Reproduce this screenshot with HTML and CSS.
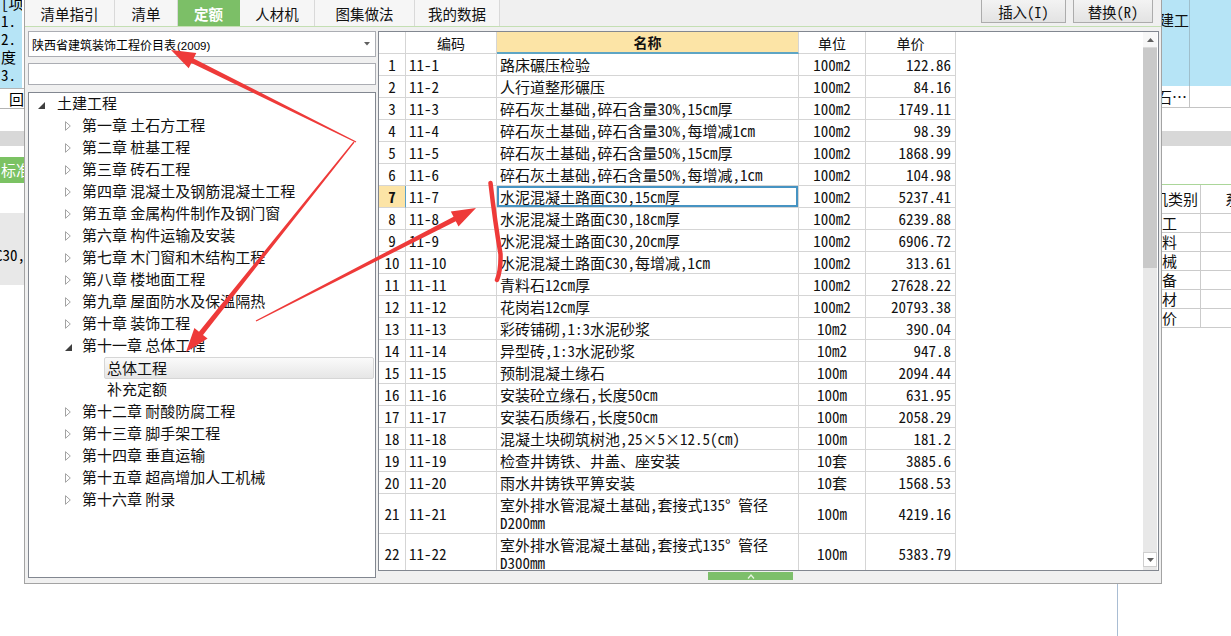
FILE: index.html
```html
<!DOCTYPE html>
<html lang="zh-CN">
<head>
<meta charset="utf-8">
<title>定额</title>
<link rel="stylesheet" href="styles.css">
</head>
<body>
<div class="screen">
  <aside class="bg-left">
    <div class="bl-blue">
      <div class="bl-ln first">[项</div>
      <div class="bl-ln">1.</div>
      <div class="bl-ln">2.</div>
      <div class="bl-ln">度</div>
      <div class="bl-ln">3.</div>
    </div>
    <div class="bl-row">回</div>
    <div class="bl-s1"></div>
    <div class="bl-gray"></div>
    <div class="bl-s2"></div>
    <div class="bl-green">标准</div>
    <div class="bl-s3"></div>
    <div class="bl-panel">C30,</div>
  </aside>

  <section class="dialog">
    <header class="topbar">
      <nav class="tabs">
        <div class="tab t1">清单指引</div>
        <div class="tab t2">清单</div>
        <div class="tab t3 active">定额</div>
        <div class="tab t4">人材机</div>
        <div class="tab t5">图集做法</div>
        <div class="tab t6">我的数据</div>
      </nav>
      <div class="btns">
        <div class="btn b1">插入(I)</div>
        <div class="btn b2">替换(R)</div>
      </div>
    </header>
    <div class="body">
      <div class="leftpane">
        <div class="combo">
          <span class="combo-text">陕西省建筑装饰工程价目表<span class="yr">(2009)</span></span>
          <svg class="combo-arrow" width="6" height="4" viewBox="0 0 6 4"><polygon points="0,0 6,0 3,3.5" fill="#606060"/></svg>
        </div>
        <div class="search"></div>
        <div class="tree">
          <div class="node lv0"><span class="ic"><svg width="7" height="7" viewBox="0 0 7 7"><polygon points="7,0 7,7 0,7" fill="#3f3f3f"/></svg></span><span>土建工程</span></div>
          <div class="node lv1"><span class="ic"><svg width="6" height="10" viewBox="0 0 6 10"><path d="M0.5,0.7 L5.3,5 L0.5,9.3 Z" fill="#fff" stroke="#a3a3a3" stroke-width="1"/></svg></span><span>第一章 土石方工程</span></div>
          <div class="node lv1"><span class="ic"><svg width="6" height="10" viewBox="0 0 6 10"><path d="M0.5,0.7 L5.3,5 L0.5,9.3 Z" fill="#fff" stroke="#a3a3a3" stroke-width="1"/></svg></span><span>第二章 桩基工程</span></div>
          <div class="node lv1"><span class="ic"><svg width="6" height="10" viewBox="0 0 6 10"><path d="M0.5,0.7 L5.3,5 L0.5,9.3 Z" fill="#fff" stroke="#a3a3a3" stroke-width="1"/></svg></span><span>第三章 砖石工程</span></div>
          <div class="node lv1"><span class="ic"><svg width="6" height="10" viewBox="0 0 6 10"><path d="M0.5,0.7 L5.3,5 L0.5,9.3 Z" fill="#fff" stroke="#a3a3a3" stroke-width="1"/></svg></span><span>第四章 混凝土及钢筋混凝土工程</span></div>
          <div class="node lv1"><span class="ic"><svg width="6" height="10" viewBox="0 0 6 10"><path d="M0.5,0.7 L5.3,5 L0.5,9.3 Z" fill="#fff" stroke="#a3a3a3" stroke-width="1"/></svg></span><span>第五章 金属构件制作及钢门窗</span></div>
          <div class="node lv1"><span class="ic"><svg width="6" height="10" viewBox="0 0 6 10"><path d="M0.5,0.7 L5.3,5 L0.5,9.3 Z" fill="#fff" stroke="#a3a3a3" stroke-width="1"/></svg></span><span>第六章 构件运输及安装</span></div>
          <div class="node lv1"><span class="ic"><svg width="6" height="10" viewBox="0 0 6 10"><path d="M0.5,0.7 L5.3,5 L0.5,9.3 Z" fill="#fff" stroke="#a3a3a3" stroke-width="1"/></svg></span><span>第七章 木门窗和木结构工程</span></div>
          <div class="node lv1"><span class="ic"><svg width="6" height="10" viewBox="0 0 6 10"><path d="M0.5,0.7 L5.3,5 L0.5,9.3 Z" fill="#fff" stroke="#a3a3a3" stroke-width="1"/></svg></span><span>第八章 楼地面工程</span></div>
          <div class="node lv1"><span class="ic"><svg width="6" height="10" viewBox="0 0 6 10"><path d="M0.5,0.7 L5.3,5 L0.5,9.3 Z" fill="#fff" stroke="#a3a3a3" stroke-width="1"/></svg></span><span>第九章 屋面防水及保温隔热</span></div>
          <div class="node lv1"><span class="ic"><svg width="6" height="10" viewBox="0 0 6 10"><path d="M0.5,0.7 L5.3,5 L0.5,9.3 Z" fill="#fff" stroke="#a3a3a3" stroke-width="1"/></svg></span><span>第十章 装饰工程</span></div>
          <div class="node lv1"><span class="ic"><svg width="7" height="7" viewBox="0 0 7 7"><polygon points="7,0 7,7 0,7" fill="#3f3f3f"/></svg></span><span>第十一章 总体工程</span></div>
          <div class="node lv2 sel"><span>总体工程</span></div>
          <div class="node lv2"><span>补充定额</span></div>
          <div class="node lv1"><span class="ic"><svg width="6" height="10" viewBox="0 0 6 10"><path d="M0.5,0.7 L5.3,5 L0.5,9.3 Z" fill="#fff" stroke="#a3a3a3" stroke-width="1"/></svg></span><span>第十二章 耐酸防腐工程</span></div>
          <div class="node lv1"><span class="ic"><svg width="6" height="10" viewBox="0 0 6 10"><path d="M0.5,0.7 L5.3,5 L0.5,9.3 Z" fill="#fff" stroke="#a3a3a3" stroke-width="1"/></svg></span><span>第十三章 脚手架工程</span></div>
          <div class="node lv1"><span class="ic"><svg width="6" height="10" viewBox="0 0 6 10"><path d="M0.5,0.7 L5.3,5 L0.5,9.3 Z" fill="#fff" stroke="#a3a3a3" stroke-width="1"/></svg></span><span>第十四章 垂直运输</span></div>
          <div class="node lv1"><span class="ic"><svg width="6" height="10" viewBox="0 0 6 10"><path d="M0.5,0.7 L5.3,5 L0.5,9.3 Z" fill="#fff" stroke="#a3a3a3" stroke-width="1"/></svg></span><span>第十五章 超高增加人工机械</span></div>
          <div class="node lv1"><span class="ic"><svg width="6" height="10" viewBox="0 0 6 10"><path d="M0.5,0.7 L5.3,5 L0.5,9.3 Z" fill="#fff" stroke="#a3a3a3" stroke-width="1"/></svg></span><span>第十六章 附录</span></div>
        </div>
      </div>

      <div class="rightpane">
        <div class="gridbox">
          <div class="grid">
            <div class="row hd"><div class="c n"></div><div class="c code">编码</div><div class="c name">名称</div><div class="c unit">单位</div><div class="c price">单价</div></div>
            <div class="row"><div class="c n">1</div><div class="c code">11-1</div><div class="c name">路床碾压检验</div><div class="c unit">100m2</div><div class="c price">122.86</div></div>
            <div class="row"><div class="c n">2</div><div class="c code">11-2</div><div class="c name">人行道整形碾压</div><div class="c unit">100m2</div><div class="c price">84.16</div></div>
            <div class="row"><div class="c n">3</div><div class="c code">11-3</div><div class="c name">碎石灰土基础,碎石含量30%,15cm厚</div><div class="c unit">100m2</div><div class="c price">1749.11</div></div>
            <div class="row"><div class="c n">4</div><div class="c code">11-4</div><div class="c name">碎石灰土基础,碎石含量30%,每增减1cm</div><div class="c unit">100m2</div><div class="c price">98.39</div></div>
            <div class="row"><div class="c n">5</div><div class="c code">11-5</div><div class="c name">碎石灰土基础,碎石含量50%,15cm厚</div><div class="c unit">100m2</div><div class="c price">1868.99</div></div>
            <div class="row"><div class="c n">6</div><div class="c code">11-6</div><div class="c name">碎石灰土基础,碎石含量50%,每增减,1cm</div><div class="c unit">100m2</div><div class="c price">104.98</div></div>
            <div class="row cur"><div class="c n">7</div><div class="c code">11-7</div><div class="c name">水泥混凝土路面C30,15cm厚</div><div class="c unit">100m2</div><div class="c price">5237.41</div></div>
            <div class="row"><div class="c n">8</div><div class="c code">11-8</div><div class="c name">水泥混凝土路面C30,18cm厚</div><div class="c unit">100m2</div><div class="c price">6239.88</div></div>
            <div class="row"><div class="c n">9</div><div class="c code">11-9</div><div class="c name">水泥混凝土路面C30,20cm厚</div><div class="c unit">100m2</div><div class="c price">6906.72</div></div>
            <div class="row"><div class="c n">10</div><div class="c code">11-10</div><div class="c name">水泥混凝土路面C30,每增减,1cm</div><div class="c unit">100m2</div><div class="c price">313.61</div></div>
            <div class="row"><div class="c n">11</div><div class="c code">11-11</div><div class="c name">青料石12cm厚</div><div class="c unit">100m2</div><div class="c price">27628.22</div></div>
            <div class="row"><div class="c n">12</div><div class="c code">11-12</div><div class="c name">花岗岩12cm厚</div><div class="c unit">100m2</div><div class="c price">20793.38</div></div>
            <div class="row"><div class="c n">13</div><div class="c code">11-13</div><div class="c name">彩砖铺砌,1:3水泥砂浆</div><div class="c unit">10m2</div><div class="c price">390.04</div></div>
            <div class="row"><div class="c n">14</div><div class="c code">11-14</div><div class="c name">异型砖,1:3水泥砂浆</div><div class="c unit">10m2</div><div class="c price">947.8</div></div>
            <div class="row"><div class="c n">15</div><div class="c code">11-15</div><div class="c name">预制混凝土缘石</div><div class="c unit">100m</div><div class="c price">2094.44</div></div>
            <div class="row"><div class="c n">16</div><div class="c code">11-16</div><div class="c name">安装砼立缘石,长度50cm</div><div class="c unit">100m</div><div class="c price">631.95</div></div>
            <div class="row"><div class="c n">17</div><div class="c code">11-17</div><div class="c name">安装石质缘石,长度50cm</div><div class="c unit">100m</div><div class="c price">2058.29</div></div>
            <div class="row"><div class="c n">18</div><div class="c code">11-18</div><div class="c name">混凝土块砌筑树池,25×5×12.5(cm)</div><div class="c unit">100m</div><div class="c price">181.2</div></div>
            <div class="row"><div class="c n">19</div><div class="c code">11-19</div><div class="c name">检查井铸铁、井盖、座安装</div><div class="c unit">10套</div><div class="c price">3885.6</div></div>
            <div class="row"><div class="c n">20</div><div class="c code">11-20</div><div class="c name">雨水井铸铁平箅安装</div><div class="c unit">10套</div><div class="c price">1568.53</div></div>
            <div class="row tall"><div class="c n">21</div><div class="c code">11-21</div><div class="c name">室外排水管混凝土基础,套接式135° 管径<br>D200mm</div><div class="c unit">100m</div><div class="c price">4219.16</div></div>
            <div class="row tall"><div class="c n">22</div><div class="c code">11-22</div><div class="c name">室外排水管混凝土基础,套接式135° 管径<br>D300mm</div><div class="c unit">100m</div><div class="c price">5383.79</div></div>
          </div>
          <div class="filler"></div>
          <div class="vscroll">
            <div class="sb-btn up"><svg width="7" height="4" viewBox="0 0 7 4"><polygon points="0,4 7,4 3.5,0" fill="#606060"/></svg></div>
            <div class="sb-thumb"></div>
            <div class="sb-track"></div>
            <div class="sb-btn down"><svg width="7" height="4" viewBox="0 0 7 4"><polygon points="0,0 7,0 3.5,4" fill="#606060"/></svg></div>
          </div>
        </div>
        <div class="splitter">
          <div class="handle"><svg width="8" height="5" viewBox="0 0 8 5"><polyline points="1,4.5 4,1 7,4.5" fill="none" stroke="#e8f5e2" stroke-width="1.2"/></svg></div>
        </div>
      </div>
    </div>
  </section>

  <aside class="bg-right">
    <div class="br-blue"><div class="br-c1 top">建工</div><div class="br-c2"></div></div>
    <div class="br-row"><div class="br-c1">石…</div><div class="br-c2"></div></div>
    <div class="br-s1"></div>
    <div class="br-gray"></div>
    <div class="br-s2"></div>
    <div class="br-table">
      <div class="br-tr br-head"><div class="br-k">机类别</div><div class="br-v">系</div></div>
      <div class="br-tr"><div class="br-k">工</div><div class="br-v"></div></div>
      <div class="br-tr"><div class="br-k">料</div><div class="br-v"></div></div>
      <div class="br-tr"><div class="br-k">械</div><div class="br-v"></div></div>
      <div class="br-tr"><div class="br-k">备</div><div class="br-v"></div></div>
      <div class="br-tr"><div class="br-k">材</div><div class="br-v"></div></div>
      <div class="br-tr"><div class="br-k">价</div><div class="br-v"></div></div>
    </div>
  </aside>

  <div class="bg-bottom"><div class="vline"></div></div>

  <svg class="marks" width="1231" height="636" viewBox="0 0 1231 636">
    <polygon points="356.3,141.5 193.6,58.5 196.3,53.1 171,50 188.7,68.3 191.4,62.9 355.7,142.5" fill="#ee3a39"/>
    <polygon points="353.5,141.6 199.0,331.7 194.4,328.0 186,352 207.6,338.6 203.0,334.9 354.5,142.4" fill="#ee3a39"/>
    <polygon points="256.3,321.5 455.8,221.2 458.5,226.5 476,208 450.8,211.4 453.5,216.7 255.7,320.5" fill="#ee3a39"/>
    <path d="M490.5,183 Q495,222 500.5,254 Q501,270 497,280" fill="none" stroke="#ee3a39" stroke-width="4.5" stroke-linecap="round"/>
  </svg>
</div>
</body>
</html>
```
FILE: styles.css
```css
* { box-sizing: border-box; margin: 0; padding: 0; }
html, body { width: 1231px; height: 636px; overflow: hidden; background: #fff; }
body { font-family: "Noto Sans CJK SC", "Noto Sans", sans-serif; color: #000; }

.screen {
  position: relative;
  width: 1231px;
  height: 636px;
  display: grid;
  grid-template-columns: 24px 1138px 69px;
  grid-template-rows: 584px 52px;
  overflow: hidden;
}

/* ---------- background application, left strip ---------- */
.bg-left {
  grid-column: 1;
  grid-row: 1 / 3;
  display: flex;
  flex-direction: column;
  overflow: hidden;
  font-family: "Noto Sans Mono CJK SC", "Noto Sans CJK SC", monospace;
  font-size: 15px;
  white-space: nowrap;
}
.bl-blue { height: 88px; width: 22px; background: #b6e4f6; line-height: 18px; padding-left: 1px; overflow: hidden; flex: none; }
.bl-ln { height: 18px; overflow: hidden; }
.bl-ln.first { margin-top: -6px; }
.bl-row { height: 21px; flex: none; border-top: 1px solid #b3b3b3; border-bottom: 1px solid #b3b3b3; line-height: 19px; padding-left: 9px; }
.bl-s1 { height: 22px; flex: none; }
.bl-gray { height: 15px; flex: none; background: #d8d8d8; }
.bl-s2 { height: 11px; flex: none; }
.bl-green { height: 26px; flex: none; background: #7bc263; color: #fff; font-family: "Noto Sans CJK SC", sans-serif; line-height: 26px; padding-left: 1px; }
.bl-s3 { height: 30px; flex: none; }
.bl-panel { height: 72px; flex: none; background: #e8e8e8; padding-top: 33px; line-height: 18px; text-indent: -5px; }

/* ---------- dialog ---------- */
.dialog {
  grid-column: 2;
  grid-row: 1;
  border: 1px solid #a3a3a3;
  border-top: none;
  background: #f0f0f0;
  display: flex;
  flex-direction: column;
}
.topbar {
  height: 27px;
  flex: none;
  border-bottom: 1px solid #c4dfb3;
  display: flex;
  background: #f0f0f0;
}
.tabs { display: flex; height: 26px; }
.tab {
  height: 26px;
  border-right: 1px solid #d9d9d9;
  background: #f6f6f6;
  font-size: 14.5px;
  display: flex;
  align-items: center;
  justify-content: center;
  color: #111;
}
.t1 { width: 90px; }
.t2 { width: 63px; }
.t3 { width: 62px; }
.t4 { width: 75px; }
.t5 { width: 100px; }
.t6 { width: 85px; }
.tab.active { background: #7cbf67; color: #fff; font-weight: bold; border-right-color: #7cbf67; }

.btns { margin-left: auto; margin-right: 8px; display: flex; gap: 7px; }
.btn {
  height: 23px;
  border: 1px solid #acacac;
  border-top: none;
  background: linear-gradient(#f3f3f3, #e3e3e3);
  font-family: "Noto Sans Mono CJK SC", "Noto Sans CJK SC", monospace;
  font-size: 14.5px;
  display: flex;
  align-items: center;
  justify-content: center;
  color: #111;
}
.b1 { width: 85px; }
.b2 { width: 80px; }

.body { flex: 1; display: flex; gap: 2px; padding: 0 2px 0 3px; min-height: 0; }

/* ---------- left pane ---------- */
.leftpane { width: 348px; flex: none; padding-top: 4px; display: flex; flex-direction: column; }
.combo {
  height: 26px;
  flex: none;
  border: 1px solid #abadb3;
  background: #fff;
  display: flex;
  align-items: center;
  padding-left: 3px;
}
.combo-text { font-size: 12px; white-space: nowrap; color: #000; }
.yr { font-family: "Liberation Sans", sans-serif; font-size: 11.5px; margin-left: 1px; }
.combo-arrow { margin-left: auto; margin-right: 5px; }
.search { height: 22px; flex: none; margin-top: 6px; border: 1px solid #abadb3; background: #fff; }
.tree {
  height: 486px;
  flex: none;
  margin-top: 7px;
  border: 1px solid #828790;
  background: #fff;
  font-size: 15px;
  color: #111;
}
.node { height: 22px; padding-bottom: 3px; display: flex; align-items: center; white-space: nowrap; }
.node .ic { display: flex; align-items: center; }
.lv0 { padding-left: 9px; }
.lv0 .ic { width: 19px; padding-top: 5px; }
.lv1 { padding-left: 36px; }
.lv1 .ic { width: 17px; padding-top: 3px; }
.lv1 .ic svg[height="7"] { margin-top: 3px; }
.lv2 { margin-left: 75px; margin-right: 1px; padding-left: 3px; }
.lv2.sel {
  background: linear-gradient(#fafafa, #e6e6e6);
  border: 1px solid #d6d6d6;
  border-radius: 2px;
  padding-left: 2px;
  padding-bottom: 2px;
}

/* ---------- right pane (grid) ---------- */
.rightpane { flex: 1; padding-top: 4px; display: flex; flex-direction: column; }
.gridbox {
  height: 540px;
  flex: none;
  border: 1px solid #828790;
  background: #fff;
  display: flex;
}
.grid {
  width: 577px;
  flex: none;
  display: flex;
  flex-direction: column;
  overflow: hidden;
  font-family: "Noto Sans Mono CJK SC", "Noto Sans CJK SC", monospace;
  font-size: 15px;
  color: #111;
}
.row {
  display: grid;
  grid-template-columns: 27px 91px 302px 67px 90px;
  height: 22px;
  flex: none;
}
.row.tall { height: 40px; }
.c {
  border-right: 1px solid #d5d5d5;
  border-bottom: 1px solid #d5d5d5;
  display: flex;
  align-items: center;
  white-space: nowrap;
  overflow: hidden;
}
.c.n { justify-content: center; }
.c.code { padding-left: 3px; }
.c.name { padding-left: 3px; }
.c.unit { justify-content: center; }
.c.price { justify-content: flex-end; padding-right: 4px; }
.row.tall .c.name { white-space: normal; line-height: 18px; }

.hd .c { font-size: 14px; justify-content: center; padding: 0; }
.hd .c.name { background: #fce4a6; border-bottom: 2px solid #5ea5c4; font-weight: bold; }

.cur .c.n { background: #fce4a6; font-weight: bold; border-right-color: #5aa0c8; }
.cur .c.name { box-shadow: inset 0 0 0 2px #4693c2; }

.filler { flex: 1; background: #fff; }
.vscroll { width: 14px; flex: none; margin-right: 1px; display: flex; flex-direction: column; background: #e8e8e8; }
.sb-btn { height: 15px; flex: none; display: flex; align-items: center; justify-content: center; background: #f7f7f7; }
.sb-btn.down { border: 1px solid #cfcfcf; background: #fff; margin-bottom: 3px; }
.sb-thumb { height: 221px; flex: none; background: #c9c9c9; border-top: 1px solid #dadada; }
.sb-track { flex: 1; background: #e8e8e8; }

.splitter { flex: 1; }
.handle {
  width: 85px;
  height: 8px;
  margin: 1px 0 0 330px;
  background: #7dbf6b;
  display: flex;
  align-items: center;
  justify-content: center;
}

/* ---------- background application, right strip ---------- */
.bg-right {
  grid-column: 3;
  grid-row: 1 / 3;
  display: flex;
  flex-direction: column;
  overflow: hidden;
  font-family: "Noto Sans Mono CJK SC", "Noto Sans CJK SC", monospace;
  font-size: 15px;
  white-space: nowrap;
  color: #111;
}
.br-blue { height: 86px; flex: none; background: #b6e4f6; display: flex; }
.br-c1 { width: 28px; flex: none; border-right: 1px solid #9fbfcc; overflow: hidden; }
.br-c1.top { padding-top: 11px; line-height: 18px; text-indent: -3px; }
.br-c2 { flex: 1; }
.br-row { height: 22px; flex: none; display: flex; border-bottom: 1px solid #c4c4c4; }
.br-row .br-c1 { line-height: 21px; text-indent: -5px; border-right-color: #c4c4c4; }
.br-s1 { height: 23px; flex: none; }
.br-gray { height: 15px; flex: none; background: #d8d8d8; }
.br-s2 { height: 38px; flex: none; }
.br-table { border-top: 1px solid #abd699; flex: none; }
.br-tr { height: 19px; display: flex; border-bottom: 1px solid #cbcbcb; line-height: 18px; }
.br-tr.br-head { height: 29px; line-height: 28px; }
.br-k { width: 39px; flex: none; border-right: 1px solid #cbcbcb; overflow: hidden; }
.br-head .br-k { text-indent: -9px; }
.br-v { flex: 1; overflow: hidden; }
.br-head .br-v { text-indent: 24px; }

/* ---------- bottom strip ---------- */
.bg-bottom { grid-column: 2; grid-row: 2; padding-left: 1093px; }
.vline { width: 1px; height: 100%; background: #a9bdd3; }

/* ---------- red annotation marks drawn over the screenshot ---------- */
.marks { position: absolute; left: 0; top: 0; pointer-events: none; }
```
